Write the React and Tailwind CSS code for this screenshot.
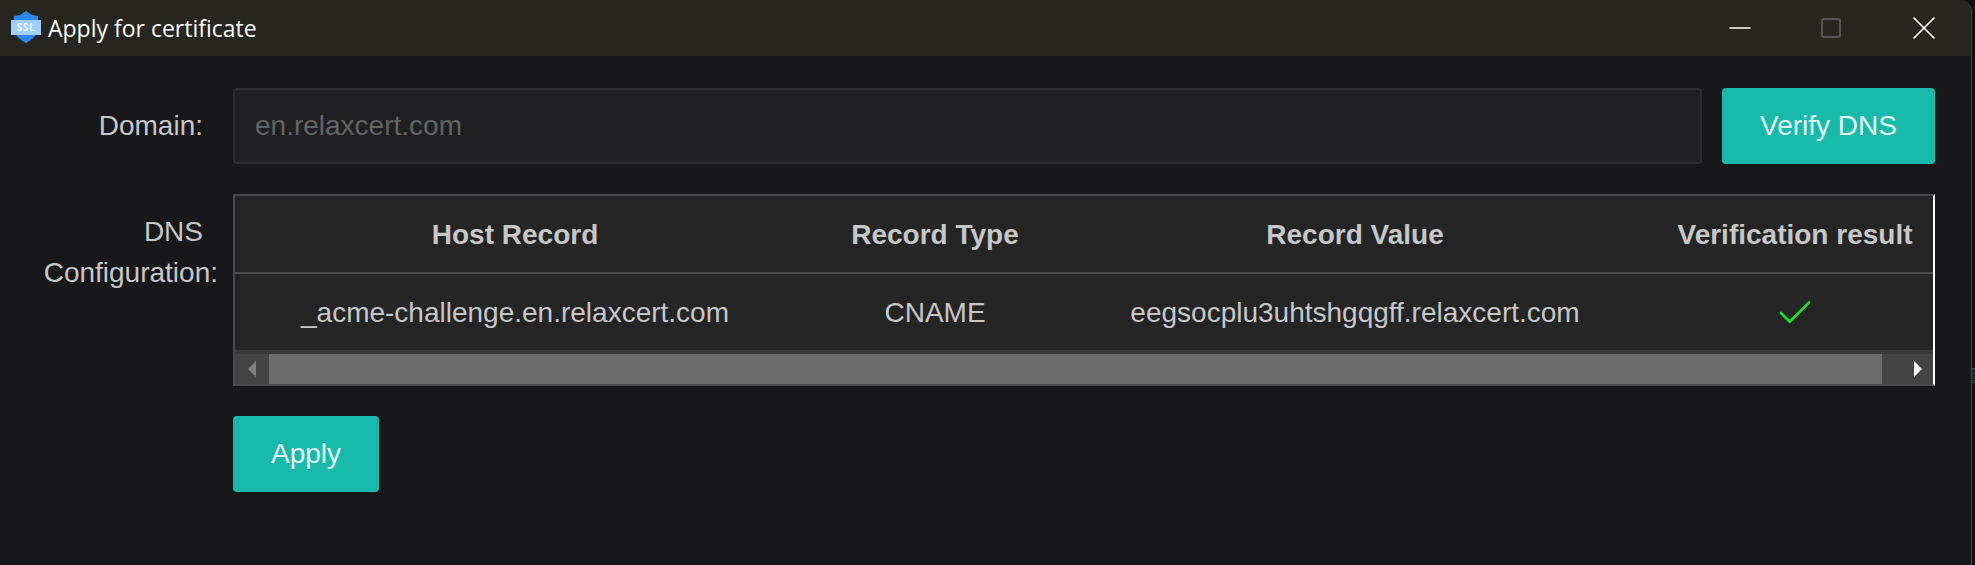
import React from 'react';
import { X, Minus, Check } from 'lucide-react';

const columns = ['Host Record', 'Record Type', 'Record Value', 'Verification result'];
const row = ['_acme-challenge.en.relaxcert.com', 'CNAME', 'eegsocplu3uhtshgqgff.relaxcert.com'];

function ShieldLogo() {
  return (
    <svg width="32" height="32" viewBox="0 0 32 32" className="shrink-0">
      <path d="M16 0 L22 4 L28 5 L28 21 Q24 28 16 32 Q8 28 4 21 L4 5 L10 4 Z" fill="#2b86ee" />
      <rect x="1" y="9" width="30" height="15" fill="#9fd0fb" />
      <text x="16" y="20" textAnchor="middle" fontSize="10" fontWeight="700" letterSpacing="0.6" fill="#eef7ff" fontFamily="Open Sans, sans-serif">SSL</text>
    </svg>
  );
}

export default function App() {
  return (
    <div className="w-[1975px] h-[565px] overflow-hidden bg-[#101012] font-['Liberation_Sans',sans-serif] text-[28px] text-[#c6c7c9] flex">
      <div className="w-[1972px] h-full flex flex-col bg-[#18181a] border-r border-[#48484a] rounded-tr-[12px] overflow-hidden">
        {/* Title bar */}
        <div className="h-[56px] bg-[#26251f] flex items-center shrink-0">
          <div className="ml-[10px] mr-[6px] -mt-[2px] flex"><ShieldLogo /></div>
          <span className="font-['Open_Sans',sans-serif] text-[23px] text-white">Apply for certificate</span>
          <div className="ml-auto flex items-center">
            <Minus className="w-[34px] h-[34px] text-white mr-[64px]" strokeWidth={1.2} />
            <div className="w-[20px] h-[20px] border-2 border-[#555] rounded-[3px] mr-[63px]" />
            <X className="w-[40px] h-[40px] text-white mr-[27px]" strokeWidth={1} />
          </div>
        </div>

        <div className="flex-1 pt-[32px]">
          {/* Domain row */}
          <div className="flex items-center">
            <label className="w-[203px] text-right">Domain:</label>
            <input
              className="ml-[30px] w-[1469px] h-[76px] bg-[#202022] border-2 border-[#2e2e30] rounded-[4px] px-[20px] outline-none placeholder:text-[#636466]"
              placeholder="en.relaxcert.com"
              readOnly
            />
            <button className="ml-[20px] w-[213px] h-[76px] bg-[#17baaa] rounded-[4px] text-[#e6fbf8]">Verify DNS</button>
          </div>

          {/* DNS table */}
          <div className="flex mt-[30px]">
            <label className="w-[218px] pt-[17px] text-right leading-[41px]">
              <span className="block pr-[15px]">DNS</span>
              Configuration:
            </label>
            <div className="ml-[15px] w-[1702px] h-[192px] border-2 border-[#4a4a4c] border-r-white bg-[#252525] overflow-hidden flex flex-col">
              <div className="grid grid-cols-[560px_280px_560px_320px] h-[78px] pt-[2px] border-b-2 border-[#4a4a4c] items-center text-center font-bold shrink-0">
                {columns.map((c) => <div key={c} className="whitespace-nowrap">{c}</div>)}
              </div>
              <div className="grid grid-cols-[560px_280px_560px_320px] h-[76px] pt-[2px] items-center text-center shrink-0">
                {row.map((c) => <div key={c} className="whitespace-nowrap">{c}</div>)}
                <div className="flex justify-center">
                  <Check className="w-[42px] h-[42px] text-[#1fe01f]" strokeWidth={1.5} />
                </div>
              </div>
              {/* Horizontal scrollbar */}
              <div className="flex-1 flex bg-[#444] border-t-4 border-[#3a3a3a]">
                <div className="w-[34px] flex items-center justify-center">
                  <div className="w-0 h-0 border-y-[8px] border-y-transparent border-r-[8px] border-r-[#808080]" />
                </div>
                <div className="w-[1613px] bg-[#6b6b6b]" />
                <div className="flex-1 flex items-center justify-center">
                  <div className="ml-[20px] w-0 h-0 border-y-[8px] border-y-transparent border-l-[8px] border-l-white" />
                </div>
              </div>
            </div>
          </div>

          {/* Apply */}
          <button className="ml-[233px] mt-[30px] w-[146px] h-[76px] bg-[#17baaa] rounded-[4px] text-[#e6fbf8]">Apply</button>
        </div>
      </div>
      {/* Sliver of the window behind */}
      <div className="flex-1 h-full pt-[368px]">
        <div className="h-[15px] bg-[#16262f] border-y border-[#48484a]" />
      </div>
    </div>
  );
}
